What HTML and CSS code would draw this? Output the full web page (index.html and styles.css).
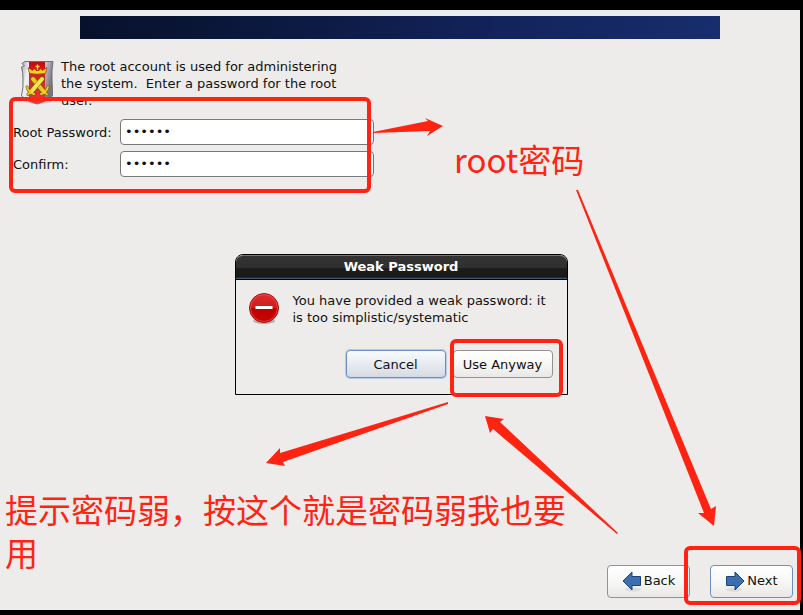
FILE: index.html
```
<!DOCTYPE html>
<html lang="en">
<head>
    <meta charset="utf-8">
    <title>Root Password</title>
    <link rel="stylesheet" href="styles.css">
</head>
<body>
    <div class="installer">
        <div class="banner"></div>

        <main class="content">
            <div class="intro">
                <svg class="shield" viewBox="0 0 36 48" aria-hidden="true">
                    <defs>
                        <linearGradient id="steel" x1="0" x2="1" y2="0.3">
                            <stop offset="0" stop-color="#a9a8ae"/>
                            <stop offset="0.25" stop-color="#f1f1f4"/>
                            <stop offset="0.7" stop-color="#c9c8cf"/>
                            <stop offset="1" stop-color="#77757f"/>
                        </linearGradient>
                        <linearGradient id="cloth" x2="0" y2="1">
                            <stop offset="0" stop-color="#b80c14"/>
                            <stop offset="0.2" stop-color="#e01820"/>
                            <stop offset="1" stop-color="#e23a3a"/>
                        </linearGradient>
                    </defs>
                    <ellipse cx="19" cy="42" rx="15" ry="4" fill="#000" opacity="0.15"/>
                    <path d="M6 3.500H34Q32.500 12 33 22Q33.500 32 33.500 38Q27 44 18 46Q9 44 2.500 38Q4.500 30 4 21Q4 14 2.500 9L5.500 8L3 5.500Z" fill="url(#steel)" stroke="#6f6e75"/>
                    <path d="M10 4H26V43Q22 45 18 45.500Q14 45 10 43Z" fill="url(#cloth)"/>
                    <path d="M10.500 15.500L9 9.500L13.500 12.500L15 10.500L17 12.500H20L22 10.500L23.500 12.500L28 9.500L26.500 15.500Q18.500 17 10.500 15.500Z" fill="#f6d21c" stroke="#8a3b06" stroke-width="0.700"/>
                    <path d="M18.500 6.500V12M16.500 8.500H20.500" stroke="#f6d21c" stroke-width="1.300"/>
                    <g stroke-linecap="round">
                        <path d="M14 21L25 34M23 21L12 34" stroke="#7b5a10" stroke-width="5.500"/>
                        <path d="M8 29Q10 35 15 36M29 29Q27 35 22 36M12 33L9 36.500M25 33L28 36.500" fill="none" stroke="#7b5a10" stroke-width="3"/>
                        <path d="M14 21L25 34" stroke="#e9cb24" stroke-width="4"/>
                        <path d="M23 21L12 34" stroke="#7b5a10" stroke-width="5"/>
                        <path d="M23 21L12 34" stroke="#f8e650" stroke-width="4"/>
                        <path d="M8 29Q10 35 15 36M29 29Q27 35 22 36M12 33L9 36.500M25 33L28 36.500" fill="none" stroke="#efcf20" stroke-width="1.800"/>
                    </g>
                </svg>
                <p class="intro-text">The root account is used for administering the system.&nbsp; Enter a password for the root user.</p>
            </div>

            <form class="password-form">
                <label for="password">Root Password:</label>
                <input type="password" id="password" value="123456">
                <label for="confirm">Confirm:</label>
                <input type="password" id="confirm" value="123456">
                <span class="mark"></span>
            </form>
        </main>

        <footer class="footer">
            <button class="nav-button" type="button">
                <svg viewBox="0 0 20 22" aria-hidden="true">
                    <ellipse cx="11" cy="19.500" rx="8" ry="2" fill="#000" opacity="0.08"/>
                    <path d="M1 11L10 2V6.500H18.500V15.500H10V20Z" fill="#3c6fb0" stroke="#1f4379"/>
                </svg>
                Back
            </button>
            <div class="marked">
                <button class="nav-button default" type="button">
                    <svg viewBox="0 0 20 22" aria-hidden="true">
                        <ellipse cx="9" cy="19.500" rx="8" ry="2" fill="#000" opacity="0.08"/>
                        <path d="M19 11L10 2V6.500H1.500V15.500H10V20Z" fill="#3c6fb0" stroke="#1f4379"/>
                    </svg>
                    Next
                </button>
                <span class="mark"></span>
            </div>
        </footer>
    </div>

    <div class="dialog" role="dialog" aria-labelledby="dialog-title">
        <h1 class="dialog-title" id="dialog-title">Weak Password</h1>
        <div class="dialog-body">
            <div class="message">
                <svg class="stop" viewBox="0 0 32 34" aria-hidden="true">
                    <defs>
                        <linearGradient id="red" x2="0" y2="1">
                            <stop offset="0" stop-color="#dc3030"/>
                            <stop offset="0.5" stop-color="#d01a1a"/>
                            <stop offset="0.520" stop-color="#c00000"/>
                            <stop offset="1" stop-color="#cc0202"/>
                        </linearGradient>
                    </defs>
                    <ellipse cx="16" cy="29" rx="11" ry="3" fill="#000" opacity="0.25"/>
                    <circle cx="16" cy="16" r="14.500" fill="url(#red)" stroke="#b00b0b"/>
                    <circle cx="16" cy="16" r="13.500" fill="none" stroke="#e45b5b" stroke-width="0.700"/>
                    <path d="M7.500 14H24.500V17H7.500Z" fill="#fff"/>
                </svg>
                <p>You have provided a weak password: it is too simplistic/systematic</p>
            </div>
            <div class="dialog-buttons">
                <button class="default focused" type="button">Cancel</button>
                <div class="marked">
                    <button type="button">Use Anyway</button>
                    <span class="mark"></span>
                </div>
            </div>
        </div>
    </div>

    <!-- Notes and arrows drawn over the installer -->
    <div class="notes" lang="zh-CN">
        <svg class="arrows" width="803" height="615" aria-hidden="true">
            <path d="M373 132L428 121L425 118L443 126L427 136L430 131L374 133Z"/>
            <path d="M576 190L578 190L711 509L716 506L714 526L698 513L704 513Z"/>
            <path d="M448 402L448 404L283 462L285 466L266 463L280 448L280 453Z"/>
            <path d="M617 534L618 533L500 422L504 419L485 416L490 433L493 429Z"/>
        </svg>
        <p class="note note-root">root密码</p>
        <p class="note note-weak">提示密码弱，按这个就是密码弱我也要用</p>
    </div>
</body>
</html>
```
FILE: styles.css
```
* {
    box-sizing: border-box;
}

body {
    margin: 0;
    min-height: 100vh;
    padding: 10px 3px 5px 0;
    display: flex;
    position: relative;
    background: #000;
    color: #111;
    font-family: "DejaVu Sans", sans-serif;
    font-size: 13px;
    line-height: 17px;
}

p {
    margin: 0;
}

.installer {
    flex: 1;
    display: flex;
    flex-direction: column;
    padding-top: 6px;
    background: #edeceb;
}

.banner {
    width: 80%;
    height: 23px;
    margin: 0 auto;
    background: linear-gradient(100deg, #07112b, #0d1a42 35%, #13235b 65%, #182d6d);
}

.content {
    flex: 1;
    padding-top: 19px;
}

.intro {
    display: flex;
    gap: 6px;
    padding-left: 19px;
}

.shield {
    width: 36px;
    height: 48px;
}

.intro-text {
    width: 290px;
}

.password-form {
    position: relative;
    display: grid;
    grid-template-columns: 100px 254px;
    gap: 6px 7px;
    align-items: center;
    width: 361px;
    margin-left: 13px;
    padding-top: 10px;
}

label {
    white-space: nowrap;
}

input {
    width: 100%;
    height: 26px;
    padding: 0 4px 2px;
    border: 1px solid #777;
    border-radius: 4px;
    background: #fff;
    color: #111;
    font-family: "DejaVu Sans", sans-serif;
    font-size: 13px;
}

button {
    min-width: 100px;
    height: 28px;
    padding: 0;
    border: 1px solid #949290;
    border-radius: 4px;
    background: linear-gradient(#fff, #f7f7f6 50%, #e9e8e6);
    color: #111;
    font: inherit;
}

button.default {
    border-color: #6a8fc0;
}

button.focused {
    background: linear-gradient(#f8fafd, #e7ebf1 50%, #d5dae2);
    box-shadow: 0 0 0 1px #b9cbe2;
}

.footer {
    display: flex;
    justify-content: flex-end;
    gap: 20px;
    padding: 0 7px 12px;
}

.nav-button {
    display: flex;
    align-items: center;
    justify-content: center;
    gap: 2px;
    min-width: 83px;
    height: 33px;
    padding-bottom: 2px;
}

.nav-button svg {
    width: 20px;
    height: 22px;
}

.dialog {
    position: absolute;
    top: 254px;
    left: 50%;
    width: 333px;
    margin-left: -167px;
    border: 1px solid #000;
    border-radius: 8px 8px 0 0;
    background: #edeceb;
}

.dialog-title {
    margin: 0;
    height: 25px;
    border-top: 1px solid #777;
    border-bottom: 1px solid #000;
    border-radius: 7px 7px 0 0;
    background: linear-gradient(#333, #303030 50%, #1c1c1c 55%, #181818 92%, #54708c);
    color: #fff;
    font-size: 13px;
    line-height: 22px;
    text-align: center;
}

.dialog-body {
    padding: 12px 14px 16px 12px;
}

.message {
    display: flex;
    gap: 13px;
}

.stop {
    flex: none;
    width: 32px;
    height: 34px;
}

.dialog-buttons {
    display: flex;
    justify-content: flex-end;
    gap: 7px;
    margin-top: 24px;
}

/* red frames */
.marked {
    position: relative;
}

.mark {
    position: absolute;
    inset: -11px -10px -19px -3px;
    border: 4px solid #ff2412;
    border-radius: 6px;
    pointer-events: none;
}

.password-form .mark {
    inset: -12px 3px -16px -4px;
}

.footer .mark {
    inset: -19px -8px -7px -26px;
}

.notes {
    position: absolute;
    inset: 0;
    overflow: hidden;
    color: #ff2412;
    pointer-events: none;
}

.arrows {
    display: block;
    fill: #ff2412;
}

.note {
    position: absolute;
    font: 400 33px/43px "Noto Sans CJK SC", sans-serif;
}

.note-root {
    top: 138px;
    left: 454px;
}

.note-weak {
    top: 488px;
    left: 5px;
    width: 570px;
}
```
